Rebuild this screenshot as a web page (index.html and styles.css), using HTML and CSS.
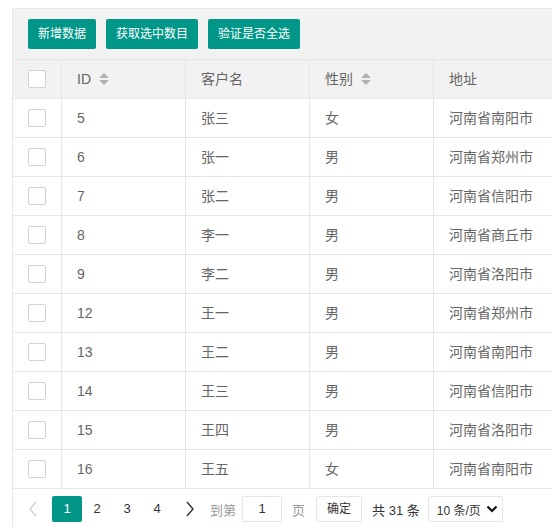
FILE: index.html
```html
<!DOCTYPE html>
<html lang="zh-CN">
<head>
    <meta charset="UTF-8">
    <title>用户表格</title>
    <link rel="stylesheet" href="styles.css">
</head>
<body>
    <div class="table-box">
        <div class="toolbar">
            <button class="btn">新增数据</button>
            <button class="btn">获取选中数目</button>
            <button class="btn">验证是否全选</button>
        </div>

        <table class="data-table">
            <colgroup>
                <col class="col-check">
                <col class="col-mid">
                <col class="col-mid">
                <col class="col-mid">
                <col class="col-addr">
            </colgroup>
            <thead>
                <tr>
                    <th class="cell-check"><span class="checkbox"></span></th>
                    <th>ID <span class="sort"><i class="up"></i><i class="down"></i></span></th>
                    <th>客户名</th>
                    <th>性别 <span class="sort"><i class="up"></i><i class="down"></i></span></th>
                    <th>地址</th>
                </tr>
            </thead>
            <tbody id="rows"></tbody>
        </table>

        <div class="pager">
            <span class="pg-arrow disabled">
                <svg width="10" height="16" viewBox="0 0 10 16"><path d="M8 1 L2 8 L8 15" fill="none" stroke="currentColor" stroke-width="1.4"/></svg>
            </span>
            <span class="pg-num current">1</span>
            <span class="pg-num">2</span>
            <span class="pg-num">3</span>
            <span class="pg-num">4</span>
            <span class="pg-arrow next">
                <svg width="10" height="16" viewBox="0 0 10 16"><path d="M2 1 L8 8 L2 15" fill="none" stroke="currentColor" stroke-width="1.4"/></svg>
            </span>
            <span class="pg-text">到第</span>
            <span class="pg-input">1</span>
            <span class="pg-text page-word">页</span>
            <span class="pg-btn">确定</span>
            <span class="pg-count">共 31 条</span>
            <span class="pg-select"><span>10 条/页</span>
                <svg width="12" height="8" viewBox="0 0 12 8"><path d="M1.5 1.5 L6 6 L10.5 1.5" fill="none" stroke="#111" stroke-width="2.2"/></svg>
            </span>
        </div>
    </div>

    <script>
        const users = [
            [5, '张三', '女', '河南省南阳市'],
            [6, '张一', '男', '河南省郑州市'],
            [7, '张二', '男', '河南省信阳市'],
            [8, '李一', '男', '河南省商丘市'],
            [9, '李二', '男', '河南省洛阳市'],
            [12, '王一', '男', '河南省郑州市'],
            [13, '王二', '男', '河南省南阳市'],
            [14, '王三', '男', '河南省信阳市'],
            [15, '王四', '男', '河南省洛阳市'],
            [16, '王五', '女', '河南省南阳市']
        ];

        const tbody = document.getElementById('rows');
        users.forEach(function(u) {
            const tr = document.createElement('tr');
            tr.innerHTML = `
                <td class="cell-check"><span class="checkbox"></span></td>
                <td>${u[0]}</td>
                <td>${u[1]}</td>
                <td>${u[2]}</td>
                <td>${u[3]}</td>
            `;
            tbody.appendChild(tr);
        });
    </script>
</body>
</html>
```

FILE: styles.css
```css
* {
    margin: 0;
    padding: 0;
    box-sizing: border-box;
}

html, body {
    overflow: hidden;
}

body {
    font-family: "Liberation Sans", "Noto Sans CJK SC", sans-serif;
    font-size: 14px;
    color: #666;
    background: #fff;
    padding: 8px 0 0 12px;
}

.table-box {
    width: 760px;
    border: 1px solid #e6e6e6;
}

.toolbar {
    display: flex;
    gap: 10px;
    height: 51px;
    padding: 10px 15px;
    background: #f2f2f2;
    border-bottom: 1px solid #e6e6e6;
}

.btn {
    height: 30px;
    padding: 0 10px;
    border: none;
    border-radius: 2px;
    background: #009688;
    color: #fff;
    font-family: inherit;
    font-size: 12px;
    line-height: 30px;
}

.data-table {
    border-collapse: separate;
    border-spacing: 0;
    table-layout: fixed;
    width: 100%;
}

.col-check { width: 49px; }
.col-mid { width: 124px; }
.col-addr { width: 340px; }

.data-table th,
.data-table td {
    height: 39px;
    padding: 0 15px;
    line-height: 38px;
    text-align: left;
    font-weight: normal;
    color: #666;
    border-right: 1px solid #e6e6e6;
    border-bottom: 1px solid #e6e6e6;
    white-space: nowrap;
    overflow: hidden;
}

.data-table th {
    background: #f2f2f2;
}

.data-table .cell-check {
    padding: 0;
    text-align: center;
}

.checkbox {
    display: inline-block;
    width: 18px;
    height: 18px;
    border: 1px solid #d2d2d2;
    border-radius: 2px;
    background: #fff;
    vertical-align: middle;
    margin-top: -3px;
}

.sort {
    display: inline-flex;
    flex-direction: column;
    gap: 2px;
    margin-left: 4px;
    vertical-align: middle;
    margin-top: -3px;
}

.sort i {
    display: block;
    width: 0;
    height: 0;
    border-left: 5px solid transparent;
    border-right: 5px solid transparent;
}

.sort .up {
    border-bottom: 5px solid #b2b2b2;
}

.sort .down {
    border-top: 5px solid #b2b2b2;
}

.pager {
    display: flex;
    align-items: center;
    height: 38px;
    padding: 2px 0 0 5px;
    color: #333;
    white-space: nowrap;
}

.pg-arrow {
    display: flex;
    align-items: center;
    justify-content: center;
    width: 30px;
    height: 26px;
    color: #333;
}

.pg-arrow.disabled {
    color: #d2d2d2;
    margin-right: 4px;
}

.pg-arrow.next {
    width: 36px;
}

.pg-num {
    width: 30px;
    height: 26px;
    line-height: 26px;
    text-align: center;
    font-size: 13px;
}

.pg-num.current {
    background: #009688;
    color: #fff;
    border-radius: 2px;
}

.pg-text {
    color: #999;
    font-size: 13px;
    margin-left: 2px;
}

.pg-input {
    width: 40px;
    height: 26px;
    line-height: 24px;
    margin-left: 6px;
    border: 1px solid #e6e6e6;
    border-radius: 2px;
    text-align: center;
    font-size: 13px;
    color: #333;
}

.page-word {
    margin-left: 10px;
}

.pg-btn {
    height: 26px;
    line-height: 24px;
    padding: 0 10px;
    margin-left: 11px;
    border: 1px solid #e6e6e6;
    border-radius: 2px;
    font-size: 12px;
    color: #333;
}

.pg-count {
    margin-left: 10px;
    font-size: 13px;
    color: #333;
}

.pg-select {
    display: flex;
    align-items: center;
    justify-content: space-between;
    flex-shrink: 0;
    width: 75px;
    height: 26px;
    margin-left: 8px;
    padding: 0 4px 0 8px;
    border: 1px solid #e6e6e6;
    border-radius: 2px;
    font-size: 12px;
    color: #333;
}
```
